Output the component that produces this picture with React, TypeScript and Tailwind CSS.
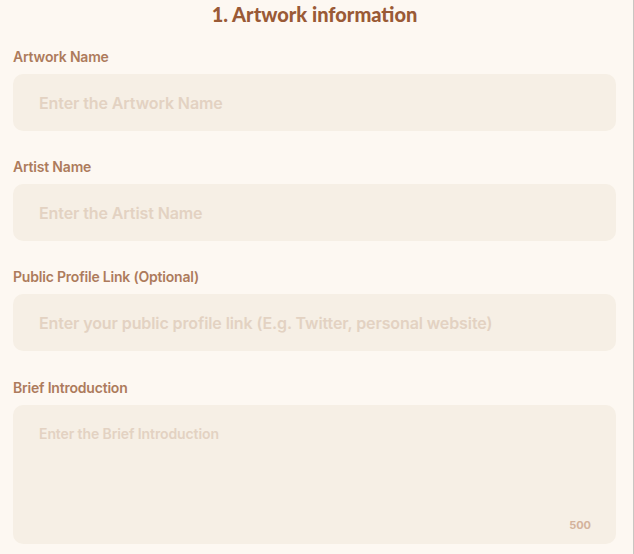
import { useState } from "react";

const FIELDS = [
  { label: "Artwork Name", placeholder: "Enter the Artwork Name" },
  { label: "Artist Name", placeholder: "Enter the Artist Name" },
  {
    label: "Public Profile Link (Optional)",
    placeholder: "Enter your public profile link (E.g. Twitter, personal website)",
  },
];

export default function App() {
  const [values, setValues] = useState<string[]>(["", "", ""]);
  const [intro, setIntro] = useState("");

  return (
    <div
      className="h-[554px] w-[634px] overflow-hidden border-r border-[#c9c6c2] bg-[#fdf8f2] pl-[13px] pr-[17px]"
      style={{ fontFamily: "Inter, 'Noto Sans', sans-serif" }}
    >
      <h2
        className="pt-[2px] text-center text-[20px] font-black leading-[24px] text-[#9a5a36]"
        style={{ fontFamily: "Lato, sans-serif" }}
      >
        1. Artwork information
      </h2>

      <div className="mt-[21px] flex flex-col gap-[26px]">
        {FIELDS.map((f, i) => (
          <div key={f.label} className="flex flex-col gap-[7px]">
            <label className="text-[14px] font-semibold leading-[20px] tracking-[-0.2px] text-[#ad7b5c]">
              {f.label}
            </label>
            <input
              value={values[i]}
              onChange={(e) =>
                setValues(values.map((v, j) => (j === i ? e.target.value : v)))
              }
              placeholder={f.placeholder}
              className="h-[57px] w-full rounded-[10px] bg-[#f6efe5] px-[26px] text-[16px] font-semibold tracking-[-0.1px] text-[#7a5a44] outline-none placeholder:text-[#e3d2c2]"
            />
          </div>
        ))}

        <div className="mt-[1px] flex flex-col gap-[7px]">
          <label className="text-[14px] font-semibold leading-[20px] tracking-[-0.2px] text-[#ad7b5c]">
            Brief Introduction
          </label>
          <div className="relative">
            <textarea
              value={intro}
              onChange={(e) => setIntro(e.target.value.slice(0, 500))}
              placeholder="Enter the Brief Introduction"
              className="block h-[139px] w-full resize-none rounded-[10px] bg-[#f6efe5] px-[26px] pt-[18px] text-[14px] font-semibold tracking-[-0.1px] text-[#7a5a44] outline-none placeholder:text-[#e3d2c2]"
            />
            <span className="absolute bottom-[11px] right-[25px] text-[11px] font-bold text-[#d4b39c]">
              {500 - intro.length}
            </span>
          </div>
        </div>
      </div>
    </div>
  );
}
